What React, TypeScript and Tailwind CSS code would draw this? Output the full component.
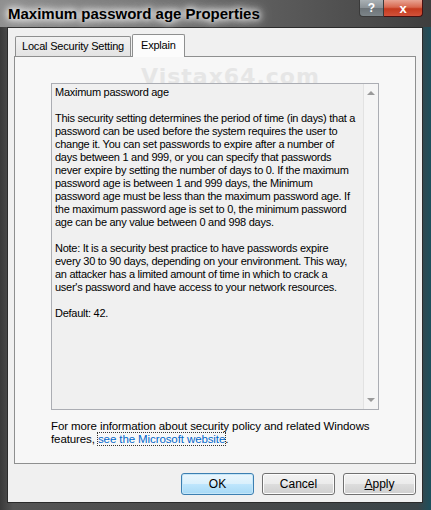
const explainLines = [
  'Maximum password age',
  '',
  'This security setting determines the period of time (in days) that a',
  'password can be used before the system requires the user to',
  'change it. You can set passwords to expire after a number of',
  'days between 1 and 999, or you can specify that passwords',
  'never expire by setting the number of days to 0. If the maximum',
  'password age is between 1 and 999 days, the Minimum',
  'password age must be less than the maximum password age. If',
  'the maximum password age is set to 0, the minimum password',
  'age can be any value between 0 and 998 days.',
  '',
  'Note: It is a security best practice to have passwords expire',
  'every 30 to 90 days, depending on your environment. This way,',
  'an attacker has a limited amount of time in which to crack a',
  "user's password and have access to your network resources.",
  '',
  'Default: 42.',
];

const DialogButton: React.FC<{ focused?: boolean; children: React.ReactNode }> = ({ focused, children }) => (
  <button
    className={
      focused
        ? 'w-[73px] h-[22px] rounded-[3px] border border-[#3c7fb1] bg-[linear-gradient(to_bottom,#eaf6fd_0%,#d9f0fc_50%,#bee6fd_51%,#a7d9f5_100%)] text-[12px] text-black shadow-[inset_0_0_0_1px_#c5e6f8]'
        : 'w-[73px] h-[22px] rounded-[3px] border border-[#707070] bg-[linear-gradient(to_bottom,#f2f2f2_0%,#ebebeb_50%,#dddddd_51%,#cfcfcf_100%)] text-[12px] text-black shadow-[inset_0_0_0_1px_#fcfcfc]'
    }
  >
    {children}
  </button>
);

export default function App() {
  return (
    <div className="w-[431px] h-[510px] flex flex-col bg-[linear-gradient(to_right,#3a3a3a_0%,#555_3%,#4a4a4a_50%,#3a4448_97%,#1d4f5c_100%)] font-['Liberation_Sans',Arial,sans-serif] overflow-hidden">
      {/* title bar */}
      <div className="h-[27px] flex items-start bg-[linear-gradient(to_right,#8f8f8f_0%,#7a7a7a_30%,#5e5e5e_60%,#4c4c4c_85%,#3e3e3e_100%)] relative">
        <div className="pl-[8px] pt-[5px] text-[15px] leading-[17px] font-bold text-black [text-shadow:0_0_6px_#fff,0_0_10px_#fff,0_0_14px_#ddd]">
          Maximum password age Properties
        </div>
        <div className="ml-auto mr-[8px] flex">
          <div className="w-[25px] h-[17px] rounded-bl-[4px] border border-[#3a3a3a] border-t-0 bg-[linear-gradient(to_bottom,#a9b0b4_0%,#8a9196_50%,#6c7378_51%,#7d8589_100%)] flex items-center justify-center text-white font-bold text-[12px] leading-none">
            ?
          </div>
          <div className="w-[39px] h-[17px] rounded-br-[4px] border border-[#4a1010] border-t-0 border-l-0 bg-[linear-gradient(to_bottom,#e8a493_0%,#d8684f_45%,#c53a1e_55%,#d2523a_100%)] flex items-center justify-center text-white font-bold text-[13px] leading-none">
            x
          </div>
        </div>
      </div>

      {/* client area */}
      <div className="flex-1 ml-[7px] mr-[8px] mb-[7px] border border-[#2b2b2b] bg-[#f0f0f0] flex flex-col">
        <div className="px-[6px] pt-[5px]">
          {/* tabs */}
          <div className="flex items-end h-[23px] relative z-10 pl-[1px]">
            <div className="h-[20px] px-[6px] border border-[#8e8f8f] border-b-0 rounded-t-[2px] bg-[linear-gradient(to_bottom,#f2f2f2,#e3e3e3)] text-[11px] leading-[19px] tracking-[-0.2px] text-black">
              Local Security Setting
            </div>
            <div className="h-[23px] px-[8px] ml-[1px] border border-[#8e8f8f] border-b-0 rounded-t-[2px] bg-[#fcfcfc] text-[11px] leading-[20px] tracking-[-0.2px] text-black -mb-px">
              Explain
            </div>
          </div>
          {/* tab panel */}
          <div className="h-[408px] border border-[#8e8f8f] bg-[#f7f7f7] relative">
            <div className="absolute left-[126px] top-[8px] text-[22px] leading-[24px] font-bold text-[#e6e6e6] tracking-[1px] font-['DejaVu_Sans',sans-serif]">
              Vistax64.com
            </div>
            <div className="mt-[26px] ml-[36px] w-[328px] h-[327px] border border-[#abadb3] bg-[#f0f0f0] flex relative">
              <div className="flex-1 pl-[3px] pt-[2px] text-[11px] leading-[13px] text-black tracking-[-0.27px]">
                {explainLines.map((line, i) => (
                  <div key={i} className="h-[13px] whitespace-pre">
                    {line}
                  </div>
                ))}
              </div>
              <div className="w-[15px] border-l border-[#e2e2e2] bg-[#f5f5f5] flex flex-col items-center justify-between py-[7px]">
                <div className="w-0 h-0 border-l-[4px] border-r-[4px] border-b-[4px] border-l-transparent border-r-transparent border-b-[#9a9a9a]" />
                <div className="w-0 h-0 border-l-[4px] border-r-[4px] border-t-[4px] border-l-transparent border-r-transparent border-t-[#9a9a9a]" />
              </div>
            </div>
            <div className="mt-[10px] ml-[36px] text-[11.5px] leading-[13px] text-black tracking-[-0.1px]">
              <div>For more information about security policy and related Windows</div>
              <div>
                features,{' '}
                <span className="text-[#0066cc] outline-1 outline-dotted outline-[#333]">see the Microsoft website</span>.
              </div>
            </div>
          </div>
        </div>

        {/* buttons */}
        <div className="flex justify-end gap-[8px] pr-[6px] mt-[9px]">
          <DialogButton focused>OK</DialogButton>
          <DialogButton>Cancel</DialogButton>
          <DialogButton>
            <span className="underline">A</span>pply
          </DialogButton>
        </div>
      </div>
    </div>
  );
}
